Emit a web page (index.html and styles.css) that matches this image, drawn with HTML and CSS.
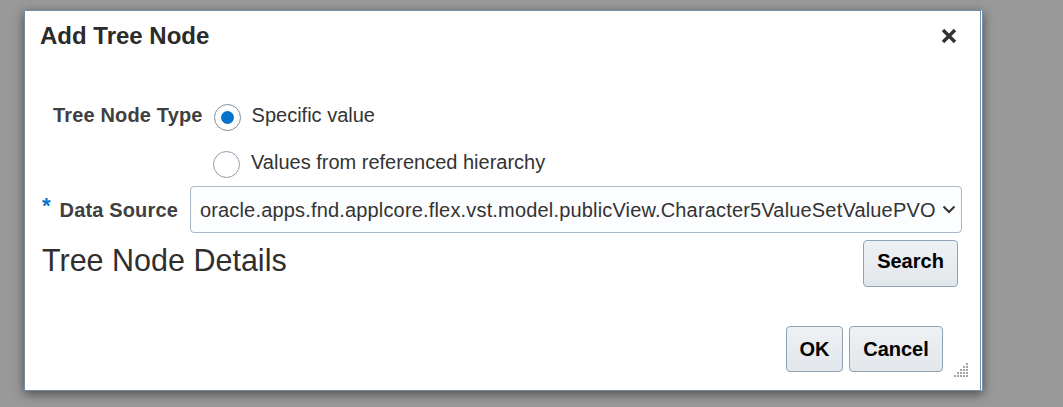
FILE: index.html
```html
<!DOCTYPE html>
<html lang="en">
<head>
<meta charset="utf-8">
<title>Add Tree Node</title>
<link rel="stylesheet" href="styles.css">
</head>
<body>
<div class="backdrop">
  <div class="dialog">
    <div class="dlg-header">
      <h1 class="dlg-title">Add Tree Node</h1>
      <button class="close" aria-label="Close">
        <svg width="16" height="16" viewBox="0 0 16 16"><path d="M2 2 L14 14 M14 2 L2 14" stroke="#333" stroke-width="3.4" fill="none"/></svg>
      </button>
    </div>
    <div class="dlg-body">
      <div class="row row-type">
        <span class="label">Tree Node Type</span>
        <span class="radio checked"></span>
        <span class="opt">Specific value</span>
      </div>
      <div class="row row-type2">
        <span class="radio"></span>
        <span class="opt">Values from referenced hierarchy</span>
      </div>
      <div class="row row-ds">
        <span class="req">*</span>
        <span class="label">Data Source</span>
        <div class="select">
          <span class="select-text">oracle.apps.fnd.applcore.flex.vst.model.publicView.Character5ValueSetValuePVO</span>
          <svg class="chev" width="14" height="9" viewBox="0 0 14 9"><path d="M1.5 1.5 L7 7 L12.5 1.5" stroke="#333" stroke-width="2" fill="none"/></svg>
        </div>
      </div>
      <div class="row row-details">
        <h2 class="section">Tree Node Details</h2>
        <button class="btn btn-search">Search</button>
      </div>
    </div>
    <div class="dlg-footer">
      <button class="btn btn-ok">OK</button>
      <button class="btn btn-cancel">Cancel</button>
    </div>
    <svg class="grip" width="16" height="16" viewBox="0 0 16 16">
      <g fill="#a3a3a3">
        <rect x="12" y="0" width="2" height="2"/>
        <rect x="9" y="3" width="2" height="2"/><rect x="12" y="3" width="2" height="2"/>
        <rect x="6" y="6" width="2" height="2"/><rect x="9" y="6" width="2" height="2"/><rect x="12" y="6" width="2" height="2"/>
        <rect x="3" y="9" width="2" height="2"/><rect x="6" y="9" width="2" height="2"/><rect x="9" y="9" width="2" height="2"/><rect x="12" y="9" width="2" height="2"/>
        <rect x="0" y="12" width="2" height="2"/><rect x="3" y="12" width="2" height="2"/><rect x="6" y="12" width="2" height="2"/><rect x="9" y="12" width="2" height="2"/><rect x="12" y="12" width="2" height="2"/>
      </g>
    </svg>
  </div>
</div>
</body>
</html>
```
FILE: styles.css
```css
html, body {
  margin: 0;
  padding: 0;
  background: #999999;
  font-family: "Liberation Sans", Arial, sans-serif;
  color: #333;
}

.backdrop {
  width: 1063px;
  height: 407px;
  padding: 10px 0 0 24px;
  box-sizing: border-box;
  overflow: hidden;
}

.dialog {
  position: relative;
  display: flex;
  flex-direction: column;
  width: 959px;
  height: 381px;
  box-sizing: border-box;
  background: #fff;
  border: 1px solid #6f8ba8;
  border-right: 3px double #7891ab;
  box-shadow: 0 3px 10px rgba(0, 0, 0, 0.5);
}

.dlg-header {
  display: flex;
  align-items: center;
  justify-content: space-between;
  padding: 11px 23px 0 15px;
  height: 28px;
}

.dlg-title {
  margin: 0;
  font-size: 24px;
  line-height: 28px;
  font-weight: bold;
  color: #2b2b2b;
}

.close {
  display: flex;
  padding: 0;
  margin: 0;
  border: 0;
  background: none;
  width: 16px;
  height: 16px;
}

.dlg-body {
  display: flex;
  flex-direction: column;
  padding-top: 51px;
}

.row {
  display: flex;
  align-items: center;
}

.row-type {
  height: 28px;
  padding-left: 28px;
}

.row-type2 {
  height: 28px;
  margin-top: 19px;
  padding-left: 188px;
}

.label {
  font-size: 20px;
  line-height: 28px;
  font-weight: bold;
  color: #3f3f3f;
  white-space: nowrap;
  letter-spacing: 0.15px;
}

.row-type .label {
  margin-right: 11px;
}

.radio {
  flex: none;
  width: 27px;
  height: 27px;
  box-sizing: border-box;
  border: 1px solid #8e9dac;
  border-radius: 50%;
  background: #fff;
  margin-top: 4px;
  display: flex;
  align-items: center;
  justify-content: center;
}

.radio.checked {
  border-color: #7f8e9c;
}

.radio.checked::after {
  content: "";
  width: 13px;
  height: 13px;
  border-radius: 50%;
  background: #0572ce;
}

.opt {
  margin-left: 11px;
  font-size: 20px;
  line-height: 28px;
  color: #333;
  white-space: nowrap;
}

.row-ds {
  height: 47px;
  margin-top: 10px;
  padding-left: 17px;
}

.req {
  font-size: 22px;
  line-height: 22px;
  font-weight: bold;
  color: #0572ce;
  margin-right: 9px;
  margin-bottom: 8px;
}

.row-ds .label {
  margin-right: 12px;
}

.select {
  display: flex;
  align-items: center;
  width: 772px;
  height: 47px;
  box-sizing: border-box;
  border: 1px solid #aab8c6;
  border-radius: 4px;
  background: #fcfdfe;
  padding: 0 5px 0 9px;
}

.select-text {
  flex: 1;
  font-size: 20px;
  line-height: 28px;
  color: #333;
  white-space: nowrap;
  overflow: hidden;
  letter-spacing: 0.17px;
}

.chev {
  flex: none;
  margin-left: 3px;
}

.row-details {
  align-items: flex-start;
  justify-content: space-between;
  margin-top: 7px;
  padding: 0 22px 0 17px;
}

.section {
  margin: 2px 0 0 0;
  font-size: 30.5px;
  line-height: 36px;
  font-weight: normal;
  color: #2f2f2f;
}

.btn {
  font-family: "Liberation Sans", Arial, sans-serif;
  font-size: 20px;
  font-weight: bold;
  color: #000;
  background: linear-gradient(#eef1f4, #e2e7eb);
  border: 1px solid #8fa3b6;
  border-radius: 4px;
  height: 47px;
  margin: 0;
  padding: 0;
  box-sizing: border-box;
  cursor: pointer;
}

.btn-search {
  width: 95px;
  padding-bottom: 4px;
}

.dlg-footer {
  display: flex;
  justify-content: flex-end;
  gap: 6px;
  margin-top: auto;
  padding: 0 37px 18px 0;
}

.btn-ok {
  width: 57px;
  height: 46px;
}

.btn-cancel {
  width: 94px;
  height: 46px;
}

.grip {
  position: absolute;
  right: 10px;
  bottom: 11px;
}
```
